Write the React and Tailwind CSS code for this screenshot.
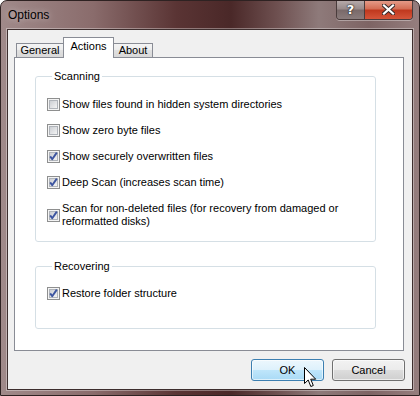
import React, { useId } from "react";

function CheckBox({ checked }) {
  const id = useId().replace(/:/g, "");
  return (
    <svg width="13" height="13" viewBox="0 0 13 13" className="shrink-0 block">
      <defs>
        <linearGradient id={`g${id}`} x1="0" y1="0" x2="1" y2="1">
          <stop offset="0" stopColor="#c9ccd1" />
          <stop offset="1" stopColor="#f6f6f6" />
        </linearGradient>
      </defs>
      <rect x="0.5" y="0.5" width="12" height="12" fill="#f4f4f4" stroke="#8e8f8f" />
      <rect x="2.5" y="2.5" width="8" height="8" fill={`url(#g${id})`} stroke="#b0b4ba" />
      {checked && (
        <path d="M3.2 6.4 L5.2 9.2 L9.8 2.6" fill="none" stroke="#3d55a0" strokeWidth="1.9" strokeLinejoin="round" />
      )}
    </svg>
  );
}

function Row({ checked, children, tall }) {
  return (
    <div className={`flex items-center gap-[2px] ${tall ? "h-[26px]" : "h-[13px]"}`}>
      <CheckBox checked={checked} />
      <span className="leading-[13px] whitespace-nowrap">{children}</span>
    </div>
  );
}

function Tab({ label, selected, w, first }) {
  if (selected) {
    return (
      <div
        className={`relative z-10 -ml-px h-[21px] -mb-px border border-b-0 border-[#898c95] bg-white text-center leading-[13px] pt-[2px] ${w}`}
      >
        {label}
      </div>
    );
  }
  return (
    <div
      className={`h-[14px] border border-b-0 border-[#898c95] bg-[linear-gradient(#f4f4f4,#ececec_50%,#e0e0e0_50%,#d8d8d8)] text-center leading-[13px] ${first ? "" : "-ml-px"} ${w}`}
    >
      {label}
    </div>
  );
}

export default function App() {
  return (
    <div
      className="relative w-[420px] h-[396px] overflow-hidden rounded-t-[7px] border border-[#2e2222] bg-[linear-gradient(to_right,#a08a8a_0%,#8a6c6c_22%,#5a3434_42%,#4a2828_55%,#6e5050_66%,#8e7a7a_76%,#7e6464_88%,#957e7e_100%)] text-black"
      style={{ fontFamily: '"Liberation Sans", Arial, sans-serif' }}
    >
      {/* title bar */}
      <div className="h-[28px] flex items-center pl-[7px] text-[12px] [text-shadow:0_0_6px_rgba(255,255,255,0.55)]">
        Options
      </div>

      {/* caption buttons */}
      <div className="absolute top-[-1px] right-[6px] flex h-[20px] rounded-b-[4px] border border-t-0 border-[#4a3c3c] overflow-hidden shadow-[0_1px_0_rgba(255,255,255,0.35)]">
        <div className="w-[28px] h-full flex items-center justify-center border-r border-[#4a3c3c] bg-[linear-gradient(#b9adad,#9a8c8c_45%,#7a6a6a_55%,#8a7c7c)]">
          <span
            className="text-white font-bold text-[13px] leading-none [text-shadow:0_0_1px_#222,0_0_1px_#222,0_0_2px_#333]"
            style={{ fontFamily: '"DejaVu Sans", sans-serif' }}
          >
            ?
          </span>
        </div>
        <div className="w-[47px] h-full flex items-center justify-center bg-[linear-gradient(#e7a08e,#d46f56_45%,#c0391f_55%,#d5553a)]">
          <svg width="13" height="11" viewBox="0 0 13 11">
            <path d="M2 1.5 L11 9.5 M11 1.5 L2 9.5" stroke="#3a2a2a" strokeWidth="4.2" strokeLinecap="square" />
            <path d="M2 1.5 L11 9.5 M11 1.5 L2 9.5" stroke="#ffffff" strokeWidth="2.2" strokeLinecap="square" />
          </svg>
        </div>
      </div>

      {/* client area */}
      <div className="mx-[6px] h-[361px] border border-[#3d2e2e] bg-[#f0f0f0] shadow-[0_0_0_1px_rgba(255,255,255,0.35)] flex flex-col text-[11px]">
        {/* tabs */}
        <div className="mt-[7px] ml-[8px] h-[20px] flex items-end">
          <Tab label="General" w="w-[48px]" first />
          <Tab label="Actions" w="w-[51px]" selected />
          <Tab label="About" w="w-[40px]" />
        </div>

        {/* panel */}
        <div className="ml-[6px] w-[390px] h-[294px] border border-[#898c95] bg-white flex flex-col">
          <fieldset className="mt-[11px] ml-[20px] w-[341px] rounded-[3px] border border-[#d5dfe5] pl-[11px] pt-[15px] pb-[13px] flex flex-col gap-[13px]">
            <legend className="ml-[5px] px-[2px] leading-[14px]">Scanning</legend>
            <Row>Show files found in hidden system directories</Row>
            <Row>Show zero byte files</Row>
            <Row checked>Show securely overwritten files</Row>
            <Row checked>Deep Scan (increases scan time)</Row>
            <Row checked tall>
              Scan for non-deleted files (for recovery from damaged or
              <br />
              reformatted disks)
            </Row>
          </fieldset>

          <fieldset className="mt-[17px] ml-[20px] w-[341px] rounded-[3px] border border-[#d5dfe5] pl-[11px] pt-[14px] pb-[28px] flex flex-col">
            <legend className="ml-[5px] px-[2px] leading-[14px]">Recovering</legend>
            <Row checked>Restore folder structure</Row>
          </fieldset>
        </div>

        {/* buttons */}
        <div className="mt-[8px] pr-[7px] flex justify-end gap-[8px]">
          <div className="w-[73px] h-[22px] rounded-[3px] border border-[#3c7fb1] bg-[linear-gradient(#ecf7fd,#ddf1fc_50%,#bfe6fb_50%,#a9daf6)] shadow-[inset_0_0_0_1px_rgba(255,255,255,0.6)] flex items-center justify-center">
            OK
          </div>
          <div className="w-[73px] h-[22px] rounded-[3px] border border-[#707070] bg-[linear-gradient(#f2f2f2,#ebebeb_50%,#dddddd_50%,#cfcfcf)] shadow-[inset_0_0_0_1px_rgba(255,255,255,0.6)] flex items-center justify-center">
            Cancel
          </div>
        </div>
      </div>

      {/* mouse cursor */}
      <svg className="absolute left-[303px] top-[366px]" width="13" height="21" viewBox="0 0 13 21">
        <path
          d="M0.5 0.5 L0.5 16.5 L4.2 13 L6.8 19.5 L9.3 18.5 L6.7 12.2 L11.7 12.2 Z"
          fill="#ffffff"
          stroke="#000000"
          strokeWidth="1"
          strokeLinejoin="miter"
        />
      </svg>
    </div>
  );
}
